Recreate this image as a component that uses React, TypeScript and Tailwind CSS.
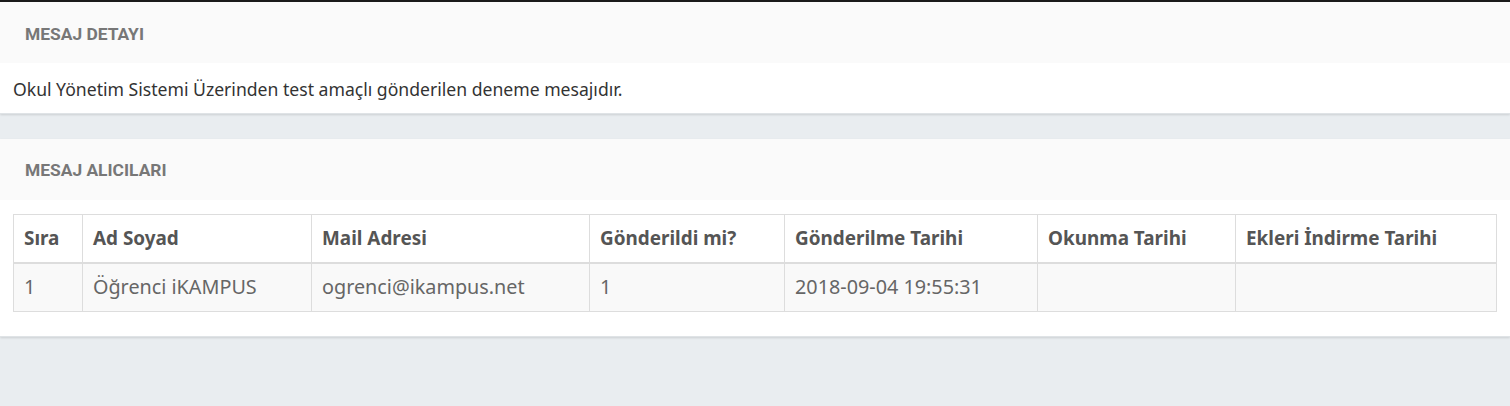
import React from "react";

const cols = [
  { label: "Sıra", w: "w-[69px]" },
  { label: "Ad Soyad", w: "w-[229px]" },
  { label: "Mail Adresi", w: "w-[278px]" },
  { label: "Gönderildi mi?", w: "w-[195px]" },
  { label: "Gönderilme Tarihi", w: "w-[253px]" },
  { label: "Okunma Tarihi", w: "w-[198px]" },
  { label: "Ekleri İndirme Tarihi", w: "" },
];

const row = ["1", "Öğrenci iKAMPUS", "ogrenci@ikampus.net", "1", "2018-09-04 19:55:31", "", ""];

export default function App() {
  return (
    <div className="w-[1510px] h-[406px] bg-[#e9edf0] border-t-2 border-[#1a1a1a] font-['Noto_Sans',sans-serif] overflow-hidden">
      <div className="bg-white shadow-[0_1px_2px_rgba(0,0,0,0.12)] border-b border-[#dfe3e6]">
        <div className="h-[61px] bg-[#fafafa] flex items-center pl-[25px] pt-[3px]">
          <span className="font-['Roboto',sans-serif] font-bold text-[17.4px] text-[#777]">MESAJ DETAYI</span>
        </div>
        <div className="h-[50px] flex items-center pl-[13px] pt-[3px] text-[17.6px] text-[#333]">
          Okul Yönetim Sistemi Üzerinden test amaçlı gönderilen deneme mesajıdır.
        </div>
      </div>
      <div className="h-[25px]" />
      <div className="bg-white shadow-[0_1px_2px_rgba(0,0,0,0.12)] border-b border-[#dfe3e6]">
        <div className="h-[61px] bg-[#fafafa] flex items-center pl-[25px] pt-[2px]">
          <span className="font-['Roboto',sans-serif] font-bold text-[17.4px] text-[#777]">MESAJ ALICILARI</span>
        </div>
        <div className="pt-[14px] pb-[24px] px-[13px]">
          <table className="w-full border-collapse">
            <thead>
              <tr className="h-[48px] bg-white">
                {cols.map((c, i) => (
                  <th
                    key={i}
                    className={`${c.w} border border-[#ddd] border-b-2 text-left font-bold text-[18.9px] text-[#555] px-[10px] align-middle`}
                  >
                    {c.label}
                  </th>
                ))}
              </tr>
            </thead>
            <tbody>
              <tr className="h-[49px] bg-[#f9f9f9]">
                {row.map((v, i) => (
                  <td key={i} className="border border-[#ddd] text-[19.8px] text-[#666] px-[10px] align-middle">
                    {v}
                  </td>
                ))}
              </tr>
            </tbody>
          </table>
        </div>
      </div>
    </div>
  );
}
